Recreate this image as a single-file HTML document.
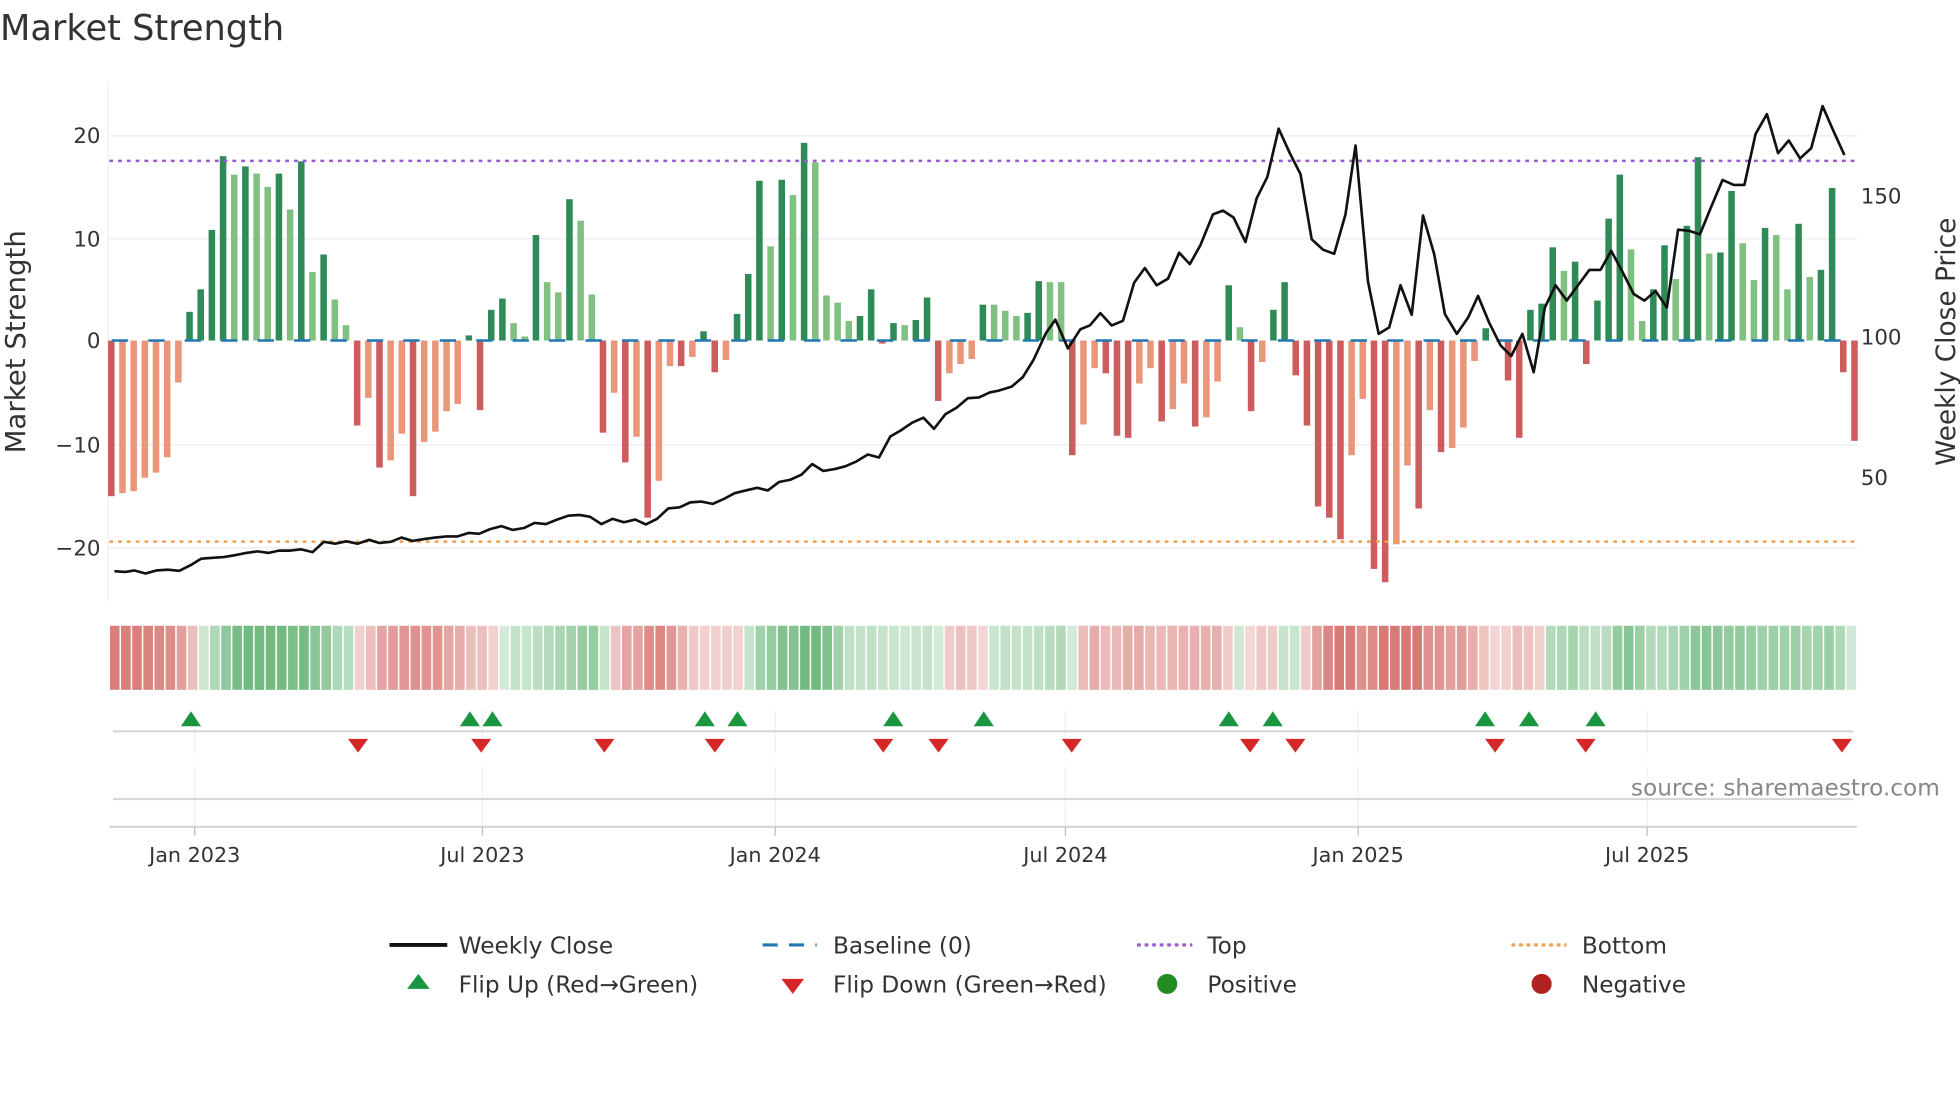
<!DOCTYPE html>
<html><head><meta charset="utf-8"><style>
html,body{margin:0;padding:0;background:#fff;width:1960px;height:1102px;overflow:hidden}
svg{display:block;font-family:"DejaVu Sans","Liberation Sans",sans-serif}
</style></head><body>
<svg id="s" width="1960" height="1102" viewBox="0 0 1560 877" preserveAspectRatio="none" xmlns="http://www.w3.org/2000/svg">
<rect width="1560" height="877" fill="#fff"/>
<text x="0" y="32" font-size="28" fill="#333">Market Strength</text>
<g stroke="#edf0f4" stroke-width="1.3">
<line x1="87" y1="108" x2="1478" y2="108"/><line x1="87" y1="190" x2="1478" y2="190"/>
<line x1="87" y1="354" x2="1478" y2="354"/><line x1="87" y1="436" x2="1478" y2="436"/>
</g>
<line x1="86" y1="65" x2="86" y2="478" stroke="#eceef1" stroke-width="1"/>
<g font-size="17" fill="#333" text-anchor="end">
<text x="80" y="114">20</text><text x="80" y="196">10</text><text x="80" y="277">0</text>
<text x="80" y="360">−10</text><text x="80" y="442">−20</text>
</g>
<g font-size="17" fill="#333">
<text x="1481" y="162">150</text><text x="1481" y="274">100</text><text x="1481" y="386">50</text>
</g>
<text transform="translate(20,272) rotate(-90)" font-size="22" fill="#333" text-anchor="middle">Market Strength</text>
<text transform="translate(1556,272) rotate(-90)" font-size="21" fill="#333" text-anchor="middle">Weekly Close Price</text>
<g id="bars"></g>
<line x1="89" y1="271" x2="1478" y2="271" stroke="#1f77b4" stroke-width="2" stroke-dasharray="13 16"/>
<line x1="87" y1="128" x2="1478" y2="128" stroke="#9b59d6" stroke-width="2" stroke-dasharray="3 4"/>
<line x1="87" y1="431" x2="1478" y2="431" stroke="#f0a050" stroke-width="2" stroke-dasharray="3 4"/>
<g id="line"></g>
<g id="heat"></g>
<g stroke="#eef0f3" stroke-width="1">
<line x1="155" y1="565" x2="155" y2="600"/><line x1="384" y1="565" x2="384" y2="600"/><line x1="617" y1="565" x2="617" y2="600"/><line x1="848" y1="565" x2="848" y2="600"/><line x1="1081" y1="565" x2="1081" y2="600"/><line x1="1311" y1="565" x2="1311" y2="600"/>
<line x1="155" y1="610" x2="155" y2="658"/><line x1="384" y1="610" x2="384" y2="658"/><line x1="617" y1="610" x2="617" y2="658"/><line x1="848" y1="610" x2="848" y2="658"/><line x1="1081" y1="610" x2="1081" y2="658"/><line x1="1311" y1="610" x2="1311" y2="658"/>
</g>
<line x1="90" y1="582" x2="1475" y2="582" stroke="#d3d6da" stroke-width="1.6"/>
<line x1="90" y1="636" x2="1475" y2="636" stroke="#d3d6da" stroke-width="1.6"/>
<line x1="87" y1="658" x2="1478" y2="658" stroke="#d3d6da" stroke-width="1.6"/>
<g stroke="#bbb" stroke-width="1">
<line x1="155" y1="658" x2="155" y2="665"/><line x1="384" y1="658" x2="384" y2="665"/><line x1="617" y1="658" x2="617" y2="665"/><line x1="848" y1="658" x2="848" y2="665"/><line x1="1081" y1="658" x2="1081" y2="665"/><line x1="1311" y1="658" x2="1311" y2="665"/>
</g>
<g id="mk"></g>
<text x="1544" y="633" font-size="18.5" fill="#888" text-anchor="end">source: sharemaestro.com</text>
<g font-size="16.5" fill="#333" text-anchor="middle">
<text x="155" y="686">Jan 2023</text><text x="384" y="686">Jul 2023</text><text x="617" y="686">Jan 2024</text>
<text x="848" y="686">Jul 2024</text><text x="1081" y="686">Jan 2025</text><text x="1311" y="686">Jul 2025</text>
</g>
<line x1="310" y1="752" x2="356" y2="752" stroke="#111" stroke-width="3"/>
<line x1="607" y1="752" x2="650" y2="752" stroke="#1f77b4" stroke-width="2.5" stroke-dasharray="12 9"/>
<line x1="905" y1="752" x2="949" y2="752" stroke="#9b59d6" stroke-width="2.5" stroke-dasharray="3 3"/>
<line x1="1203" y1="752" x2="1247" y2="752" stroke="#f0a050" stroke-width="2.5" stroke-dasharray="3 3"/>
<polygon points="324,787 342,787 333,775" fill="#1a9641"/>
<polygon points="622,779 640,779 631,791" fill="#d62728"/>
<circle cx="929" cy="783" r="8" fill="#228b22"/>
<circle cx="1227" cy="783" r="8" fill="#b22222"/>
<g font-size="18.5" fill="#333">
<text x="365" y="759">Weekly Close</text><text x="663" y="759">Baseline (0)</text><text x="961" y="759">Top</text><text x="1259" y="759">Bottom</text>
<text x="365" y="790">Flip Up (Red→Green)</text><text x="663" y="790">Flip Down (Green→Red)</text><text x="961" y="790">Positive</text><text x="1259" y="790">Negative</text>
</g>
</svg>
<script>
var NS="http://www.w3.org/2000/svg";
function el(p,t,a){var e=document.createElementNS(NS,t);for(var k in a)e.setAttribute(k,a[k]);p.appendChild(e);return e;}
var d="-15.2d,-14.9l,-14.7l,-13.4l,-12.9l,-11.4l,-4.1l,2.8d,5d,10.8d,18d,16.2l,17d,16.3l,15l,16.3d,12.8l,17.5d,6.7l,8.4d,4l,1.5l,-8.3d,-5.6l,-12.4d,-11.7l,-9.1l,-15.2d,-9.9l,-8.9l,-6.9l,-6.2l,0.5d,-6.8d,3d,4.1d,1.7l,0.4l,10.3d,5.7l,4.7l,13.8d,11.7l,4.5l,-9d,-5.1l,-11.9d,-9.4l,-17.3d,-13.7l,-2.5l,-2.5d,-1.6l,0.9d,-3.1d,-1.9l,2.6d,6.5d,15.6d,9.2l,15.7d,14.2l,19.3d,17.4l,4.4l,3.7l,1.9l,2.4d,5d,-0.3d,1.7d,1.5l,2d,4.2d,-5.9d,-3.2l,-2.3l,-1.8l,3.5d,3.5l,2.9l,2.4l,2.7d,5.8d,5.7l,5.7l,-11.2d,-8.2l,-2.7l,-3.2d,-9.3d,-9.5d,-4.2l,-2.7l,-7.9d,-6.7l,-4.2l,-8.4d,-7.5l,-4l,5.4d,1.3l,-6.9d,-2.1l,3d,5.7d,-3.4d,-8.3d,-16.2d,-17.3d,-19.4d,-11.2l,-5.7l,-22.3d,-23.6d,-19.9l,-12.2l,-16.4d,-6.8l,-10.9d,-10.5l,-8.5l,-2l,1.2d,0d,-3.9d,-9.5d,3d,3.6d,9.1d,6.8l,7.7d,-2.3d,3.9d,11.9d,16.2d,8.9l,1.9l,5d,9.3d,6l,11.2d,17.9d,8.5l,8.6d,14.6d,9.5l,5.9l,11d,10.3l,5l,11.4d,6.2l,6.9d,14.9d,-3.1d,-9.8d".split(",");
var bars=document.getElementById("bars"),heat=document.getElementById("heat");
var N=d.length,x0=88.6,step=(1476-x0)/(N-1);
var vals=[];
d.forEach(function(s,i){var t=s.slice(-1),v=parseFloat(s);vals.push(v);var cx=x0+i*step;
 var col=v>=0?(t=="d"?"#2e8b57":"#80c080"):(t=="d"?"#cd5c5c":"#e9967a");
 var h=Math.abs(v)*8.15;if(h<0.5)return;
 el(bars,"rect",{x:cx-2.6,y:v>=0?271-h:271,width:5.2,height:h,fill:col});
});
var hs=(1478-87)/N;
for(var i=0;i<N;i++){var s=0,n=0;for(var j=i-2;j<=i;j++){if(j>=0){s+=vals[j];n++;}}var m=s/n;
 var a=0.22+0.5*Math.min(Math.abs(m)/16,1);
 var c=m>=0?"rgba(60,160,80,"+a+")":"rgba(200,70,65,"+a+")";
 el(heat,"rect",{x:87+i*hs+0.5,y:498,width:hs-1.2,height:51,fill:c});}
var z1=[183,1492,200,1494,215,1490,233,1498,250,1490,268,1488,287,1491,305,1476,322,1459,340,1457,358,1455,376,1450,394,1444,412,1440,430,1444,446,1438,464,1438,482,1435,500,1442,518,1415,536,1420,554,1414,572,1420,590,1410,607,1418,625,1415,642,1404,660,1413,678,1408,696,1404,714,1401,732,1401,750,1392,766,1394,784,1382,802,1374,820,1384,838,1379,855,1366,873,1369,891,1357,909,1347,927,1345,944,1350,962,1369,980,1355,998,1364,1016,1357,1033,1370,1051,1355,1069,1328,1087,1325,1104,1312,1122,1310,1140,1316,1157,1304,1175,1288,1193,1281,1211,1274,1228,1281,1246,1259,1264,1253,1282,1240,1299,1212,1317,1230,1335,1225,1352,1218,1370,1205,1388,1187,1406,1195,1424,1140,1441,1124,1459,1104,1477,1091,1494,1120,1512,1082,1530,1065,1548,1040,1566,1038];
var z2=[15,1025,30,1020,50,1010,68,985,85,940,105,870,120,835,140,910,160,860,175,850,192,818,210,850,228,838,246,738,263,700,282,745,300,728,318,660,335,690,352,640,372,560,388,550,405,568,424,632,442,518,459,462,477,336,495,400,512,455,530,625,548,652,566,663,584,560,600,380,620,735,637,872,654,855,672,745,690,822,708,563,726,665,743,820,762,872,780,830,796,773,814,843,832,902,849,930,867,872,885,972,903,803,920,745,938,785,956,745,974,705,992,705,1009,655,1027,710,1045,768,1062,785,1080,760,1098,803,1116,600,1134,603,1151,612,1169,540,1187,470,1205,483,1222,483,1240,350,1258,298,1276,400,1293,367,1311,414,1329,387,1347,277,1364,340,1382,405];
var pts=[];
for(var k=0;k<z1.length;k+=2)pts.push((z1[k]*0.4976).toFixed(1)+","+(z1[k+1]*0.3047).toFixed(1));
for(var k=0;k<z2.length;k+=2)pts.push((780.3+z2[k]*0.4976).toFixed(1)+","+(z2[k+1]*0.3047).toFixed(1));
el(document.getElementById("line"),"polyline",{points:pts.join(" "),fill:"none",stroke:"#111","stroke-width":2.1,"stroke-linejoin":"round"});
var mk=document.getElementById("mk");
[152,374,392,561,587,711,783,978,1013,1182,1217,1270].forEach(function(x){el(mk,"polygon",{points:(x-8)+",578 "+(x+8)+",578 "+x+",566",fill:"#1a9641"});});
[285,383,481,569,703,747,853,995,1031,1190,1262,1466].forEach(function(x){el(mk,"polygon",{points:(x-8)+",588 "+(x+8)+",588 "+x+",599",fill:"#d62728"});});
</script>
</body></html>
